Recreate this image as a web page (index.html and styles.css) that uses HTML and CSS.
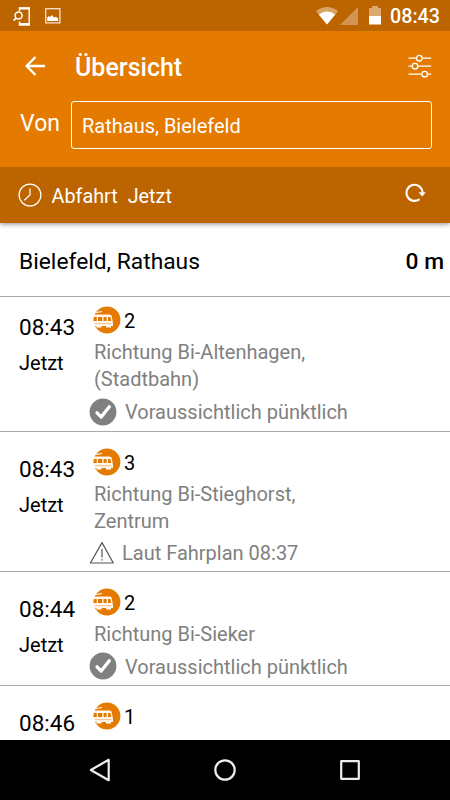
FILE: index.html
```html
<!DOCTYPE html>
<html lang="de">

<head>
    <meta charset="UTF-8">
    <meta name="viewport" content="width=device-width, initial-scale=1.0">
    <title>Übersicht</title>
    <link rel="stylesheet" href="styles.css">
</head>

<body>
    <!-- Shared icons -->
    <svg class="symbols" width="0" height="0">
        <symbol id="tram" viewBox="0 0 28 28">
            <circle cx="14" cy="14" r="13.4" fill="#e57a00" />
            <path d="M2 6.6L9 5.6" stroke="#fff" stroke-width="1" fill="none" />
            <path d="M1 8.6H16.5L18.6 9.5L20 17V20H1V16.5H0V9.6Z" fill="#fff" fill-opacity=".92" />
            <path d="M.8 10.9H3.8V15H.4ZM5 10.9H9.2V15H5ZM10.6 10.9H13.6V15H10.6ZM15 10.9H17.4L18.2 15H15Z" fill="#e57a00" />
            <path d="M2 17.6H18.5" stroke="#f3b877" stroke-width=".8" />
            <path d="M3.5 20.8H8.5M13 20.8H18" stroke="#fff" stroke-width="1.4" />
        </symbol>
        <symbol id="check" viewBox="0 0 28 28">
            <circle cx="14" cy="14" r="13.4" fill="#808080" />
            <path d="M8 14.8L12.2 19L20.3 8.8" fill="none" stroke="#fff" stroke-width="3.3" stroke-linecap="round" stroke-linejoin="round" />
        </symbol>
        <symbol id="warning" viewBox="0 0 26 24">
            <path d="M13 1.6L24.3 22H1.4Z" fill="none" stroke="#555" stroke-width="1.2" stroke-linejoin="round" />
            <path d="M13 8V16.5M13 18V19.6" stroke="#666" stroke-width="1.3" />
        </symbol>
    </svg>

    <div class="status-bar">
        <svg class="icon-search-phone" width="18" height="20" viewBox="0 0 18 20">
            <path d="M6.5 4V1H16.2V18H6.5V14.5" fill="none" stroke="#fff" stroke-width="1.4" />
            <path d="M6 1.5H17M6 17H17" stroke="#fff" stroke-width="2.2" />
            <circle cx="5.6" cy="8.6" r="3.5" fill="#bb6400" stroke="#fff" stroke-width="1.5" />
            <path d="M3 11.2L.6 13.6" stroke="#fff" stroke-width="1.8" />
        </svg>
        <svg class="icon-image" width="16" height="16" viewBox="0 0 16 16">
            <rect x=".7" y=".7" width="14.2" height="14.2" fill="none" stroke="#f5e0cc" stroke-width="1.3" />
            <path d="M2.2 13V9.5L3.7 8L5 9L7 7L9 9.5L11 8.7L13.2 10.5V13Z" fill="#fff" />
        </svg>
        <div class="status-right">
            <svg width="22" height="18" viewBox="0 0 22 18">
                <path d="M0 4.2Q11 -4 22 4.2L11 17.5Z" fill="#d9a366" />
                <path d="M2.8 7.5Q11 1.7 19.2 7.5L11 17.5Z" fill="#fff" />
            </svg>
            <svg class="icon-signal" width="18" height="18" viewBox="0 0 18 18">
                <path d="M18 0V18H0Z" fill="#d19554" />
            </svg>
            <svg class="icon-battery" width="12" height="19" viewBox="0 0 12 19">
                <path d="M0 2H3V0H9V2H12V10H0Z" fill="#dca970" />
                <path d="M0 10H12V18.5H0Z" fill="#fff" />
            </svg>
            <span class="clock">08:43</span>
        </div>
    </div>

    <header>
        <div class="toolbar">
            <svg width="20" height="20" viewBox="0 0 20 20">
                <path d="M10.5 1L1.6 10L10.5 19M1.6 10H20" fill="none" stroke="#fff" stroke-width="2.3" />
            </svg>
            <h1>Übersicht</h1>
            <svg class="icon-filter" width="24" height="24" viewBox="0 0 24 24" fill="none" stroke="#fff" stroke-width="1.3">
                <path d="M.5 4.2H8.3M14.3 4.2H23.2M.5 12.2H4M10 12.2H23.2M.5 20.2H13.6M19.6 20.2H23.2" />
                <circle cx="11.3" cy="4.2" r="2.8" />
                <circle cx="7" cy="12.2" r="2.8" />
                <circle cx="16.7" cy="20.2" r="2.8" />
            </svg>
        </div>
        <div class="search">
            <label>Von</label>
            <div class="field">Rathaus, Bielefeld</div>
        </div>
    </header>

    <div class="time-bar">
        <svg width="24" height="24" viewBox="0 0 24 24" fill="none" stroke="#fff" stroke-width="1.2">
            <circle cx="12" cy="12" r="10.9" />
            <path d="M12 5.5V12L6.3 17.2" />
        </svg>
        <span class="mode">Abfahrt</span>
        <span>Jetzt</span>
        <svg class="icon-refresh" width="21" height="20" viewBox="0 0 21 20">
            <path d="M14.5 16.1A8 8 0 1 1 17.5 9.5" fill="none" stroke="#fff" stroke-width="2.1" />
            <path d="M13.6 9.2H20.8L17.2 13.6Z" fill="#fff" />
        </svg>
    </div>

    <main>
        <div class="station">
            <span>Bielefeld, Rathaus</span>
            <span class="distance">0 m</span>
        </div>

        <div class="departure first">
            <div class="when">
                <div class="time">08:43</div>
                <div class="relative">Jetzt</div>
            </div>
            <div class="info">
                <div class="line"><svg><use href="#tram" /></svg><span>2</span></div>
                <div class="direction">Richtung Bi-Altenhagen,<br>(Stadtbahn)</div>
                <div class="state"><svg><use href="#check" /></svg><span>Voraussichtlich pünktlich</span></div>
            </div>
        </div>

        <div class="departure scheduled">
            <div class="when">
                <div class="time">08:43</div>
                <div class="relative">Jetzt</div>
            </div>
            <div class="info">
                <div class="line"><svg><use href="#tram" /></svg><span>3</span></div>
                <div class="direction">Richtung Bi-Stieghorst,<br>Zentrum</div>
                <div class="state"><svg><use href="#warning" /></svg><span>Laut Fahrplan 08:37</span></div>
            </div>
        </div>

        <div class="departure">
            <div class="when">
                <div class="time">08:44</div>
                <div class="relative">Jetzt</div>
            </div>
            <div class="info">
                <div class="line"><svg><use href="#tram" /></svg><span>2</span></div>
                <div class="direction">Richtung Bi-Sieker</div>
                <div class="state"><svg><use href="#check" /></svg><span>Voraussichtlich pünktlich</span></div>
            </div>
        </div>

        <div class="departure">
            <div class="when">
                <div class="time">08:46</div>
            </div>
            <div class="info">
                <div class="line"><svg><use href="#tram" /></svg><span>1</span></div>
            </div>
        </div>
    </main>

    <nav>
        <svg width="22" height="24" viewBox="0 0 22 24">
            <path d="M19.7 1.8V22.2L1.8 12Z" />
        </svg>
        <svg width="22" height="22" viewBox="0 0 22 22">
            <circle cx="11" cy="11" r="9.7" />
        </svg>
        <svg width="20" height="20" viewBox="0 0 20 20">
            <rect x="1.2" y="1.2" width="17.6" height="17.6" />
        </svg>
    </nav>
</body>

</html>
```
FILE: styles.css
```css
* {
    box-sizing: border-box;
}

body {
    margin: 0;
    height: 800px;
    display: flex;
    flex-direction: column;
    overflow: hidden;
    font-family: Roboto, sans-serif;
    background: #fff;
    color: #000;
}

svg {
    display: block;
    flex-shrink: 0;
}

.symbols {
    position: absolute;
}

/* Android status bar */
.status-bar {
    height: 31px;
    flex-shrink: 0;
    display: flex;
    align-items: center;
    padding: 0 10px 0 13px;
    background: #bb6400;
    color: #fff;
}

.icon-search-phone {
    margin-top: 3px;
}

.icon-image {
    margin-left: 14px;
}

.status-right {
    margin-left: auto;
    display: flex;
    align-items: center;
}

.icon-signal {
    margin-left: 2px;
}

.icon-battery {
    margin-left: 11px;
}

.clock {
    padding-top: 2px;
    margin-left: 9px;
    font-size: 19.7px;
    font-weight: 500;
    line-height: 31px;
}

header {
    position: relative;
    z-index: 1;
    height: 136px;
    flex-shrink: 0;
    background: #e57a00;
    color: #fff;
}

.toolbar {
    height: 70px;
    display: flex;
    align-items: center;
    padding: 0 18px 0 25px;
}

h1 {
    margin: 3px 0 0 30px;
    font-size: 25px;
    font-weight: 500;
}

.icon-filter {
    margin-left: auto;
}

.search {
    display: flex;
    padding: 0 18px 0 20px;
}

.search label {
    width: 51px;
    font-size: 23px;
    line-height: 45px;
}

.field {
    flex: 1;
    height: 48px;
    border: 1.5px solid #fff;
    border-radius: 3px;
    padding-left: 10px;
    font-size: 20px;
    line-height: 49px;
}

.time-bar {
    position: relative;
    height: 56px;
    flex-shrink: 0;
    display: flex;
    align-items: center;
    padding: 0 24px 0 18px;
    background: #bb6400;
    color: #fff;
    font-size: 19.8px;
    box-shadow: 0 1px 5px rgba(0, 0, 0, .45);
}

.time-bar span {
    padding-top: 2px;
}

.mode {
    margin: 0 10px 0 9.5px;
}

.icon-refresh {
    margin: -4px 0 0 auto;
}

main {
    flex: 1;
    min-height: 0;
    overflow: hidden;
}

.station {
    height: 74px;
    display: flex;
    justify-content: space-between;
    padding: 0 6px 0 19px;
    border-bottom: 1px solid #aaa;
    font-size: 22.8px;
    line-height: 77px;
}

.distance {
    font-weight: 500;
}

.departure {
    display: flex;
    padding: 16px 0 5px 19px;
    border-bottom: 1px solid #aaa;
}

.departure.first {
    padding-top: 9px;
    padding-bottom: 6px;
}

.departure.scheduled {
    padding-bottom: 4px;
}

.when {
    width: 74px;
    padding-top: 5px;
}

.time {
    font-size: 22.5px;
    line-height: 32px;
}

.relative {
    margin-top: 4px;
    font-size: 20px;
    line-height: 32px;
}

.line {
    display: flex;
    align-items: center;
    height: 28px;
    font-size: 20px;
}

.line span,
.state span {
    padding-top: 2px;
}

.line svg {
    width: 28px;
    height: 28px;
    margin-right: 3px;
}

.direction {
    margin: 5px 0 5px 1px;
    font-size: 20px;
    line-height: 27px;
    color: #808080;
}

.state {
    display: flex;
    align-items: center;
    height: 28px;
    margin: -1px 0 0 -4px;
    font-size: 20px;
    color: #808080;
}

.state svg {
    width: 28px;
    height: 28px;
    margin-right: 8px;
}

.first .state svg {
    margin-top: 2px;
}

.scheduled .state svg {
    width: 26px;
    height: 24px;
    margin-right: 7px;
}

.scheduled .state span {
    padding-top: 0;
}

/* Android navigation buttons */
nav {
    height: 60px;
    flex-shrink: 0;
    display: flex;
    align-items: center;
    justify-content: space-between;
    padding: 0 90px 0 89px;
    background: #000;
    fill: none;
    stroke: #eee;
    stroke-width: 2.2;
    stroke-linejoin: round;
}

nav svg:nth-child(2) {
    margin-right: 2px;
}
```
